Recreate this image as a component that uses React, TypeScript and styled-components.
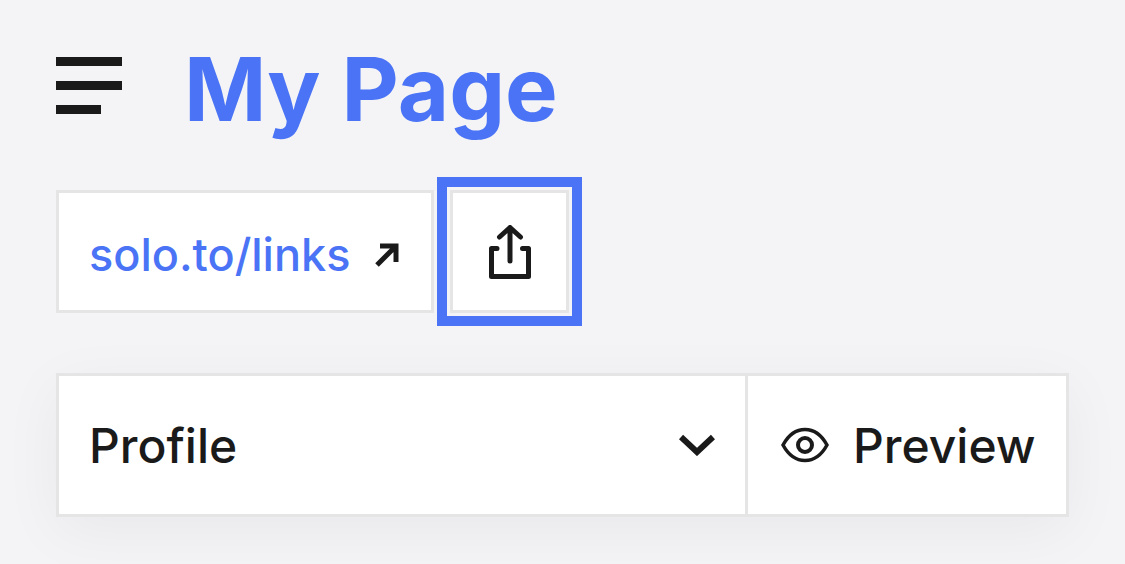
import styled, { createGlobalStyle } from 'styled-components';

const GlobalStyle = createGlobalStyle`
  html, body {
    margin: 0;
    padding: 0;
    background: #f4f4f7;
    overflow: hidden;
  }
  * {
    box-sizing: border-box;
  }
`;

const Page = styled.div`
  width: 1125px;
  height: 564px;
  padding: 40px 56px 0;
  font-family: Inter, "Liberation Sans", sans-serif;
  color: #1a1a1a;
`;

const Header = styled.header`
  display: flex;
  align-items: center;
  gap: 62px;
  height: 97px;
`;

const MenuButton = styled.div`
  display: flex;
  flex-direction: column;
  gap: 14.5px;
  width: 66px;
  margin-bottom: 6px;
`;

const MenuBar = styled.span<{ $short?: boolean }>`
  display: block;
  height: 9.5px;
  width: ${({ $short }) => ($short ? '45px' : '66px')};
  background: #1a1a1a;
`;

const Title = styled.h1`
  margin: 0;
  font-size: 88.5px;
  line-height: 97px;
  font-weight: 700;
  color: #4a74f5;
`;

const LinkRow = styled.div`
  display: flex;
  margin-top: 53px;
  gap: 16px;
`;

const UrlBox = styled.a`
  display: flex;
  align-items: center;
  gap: 25px;
  width: 378px;
  height: 123px;
  padding-left: 30px;
  background: #fff;
  border: 3px solid #e5e5e5;
`;

const UrlText = styled.span`
  font-size: 45px;
  font-weight: 500;
  line-height: 1;
  padding-top: 5px;
  color: #4a74f5;
`;

const ArrowIcon = styled.svg`
  margin-top: 6px;
`;

const ShareBox = styled.button`
  display: flex;
  align-items: center;
  justify-content: center;
  width: 119px;
  height: 123px;
  padding: 0;
  background: #fff;
  border: 3px solid #e5e5e5;
  outline: 10px solid #4a74f5;
  outline-offset: 3px;
  color: #1a1a1a;
`;

const Toolbar = styled.div`
  display: flex;
  width: 1013px;
  height: 144px;
  margin-top: 60px;
  background: #fff;
  border: 3px solid #e5e5e5;
  box-shadow: 0 14px 60px rgba(0, 0, 0, 0.05);
`;

const PageSelect = styled.div`
  flex: 1;
  display: flex;
  align-items: center;
  justify-content: space-between;
  padding: 0 30px 0 30px;
  border-right: 3px solid #e5e5e5;
`;

const ToolbarLabel = styled.span`
  font-size: 48px;
  font-weight: 500;
`;

const PreviewButton = styled.div`
  display: flex;
  flex: none;
  align-items: center;
  gap: 24px;
  width: 318px;
  padding-left: 33px;
`;

function App() {
  return (
    <>
      <GlobalStyle />
      <Page>
        <Header>
          <MenuButton>
            <MenuBar />
            <MenuBar />
            <MenuBar $short />
          </MenuButton>
          <Title>My Page</Title>
        </Header>
        <LinkRow>
          <UrlBox>
            <UrlText>solo.to/links</UrlText>
            <ArrowIcon width="24" height="24" viewBox="0 0 24 24" fill="none" stroke="#1a1a1a" strokeWidth="5">
              <path d="M2 22 L20 4 M5 3 H21 V19" />
            </ArrowIcon>
          </UrlBox>
          <ShareBox>
            <svg width="42" height="54" viewBox="0 0 42 54" fill="none" stroke="#1a1a1a" strokeWidth="5" strokeLinecap="round" strokeLinejoin="round">
              <path d="M21 36 V2.5 M10.5 12 L21 2.5 L31.5 12" />
              <path d="M8 23.5 H2.5 V51.5 H39.5 V23.5 H33.5" />
            </svg>
          </ShareBox>
        </LinkRow>
        <Toolbar>
          <PageSelect>
            <ToolbarLabel>Profile</ToolbarLabel>
            <svg width="36" height="22" viewBox="0 0 36 22" fill="none" stroke="#1a1a1a" strokeWidth="6">
              <path d="M2 3 L18 18 L34 3" />
            </svg>
          </PageSelect>
          <PreviewButton>
            <svg width="48" height="36" viewBox="0 0 48 36" fill="none" stroke="#1a1a1a" strokeWidth="3.5">
              <path d="M2 18 C8 7 16 2.5 24 2.5 C32 2.5 40 7 46 18 C40 29 32 33.5 24 33.5 C16 33.5 8 29 2 18 Z" />
              <circle cx="24" cy="18" r="7" strokeWidth="4" />
            </svg>
            <ToolbarLabel>Preview</ToolbarLabel>
          </PreviewButton>
        </Toolbar>
      </Page>
    </>
  );
}

export default App;
